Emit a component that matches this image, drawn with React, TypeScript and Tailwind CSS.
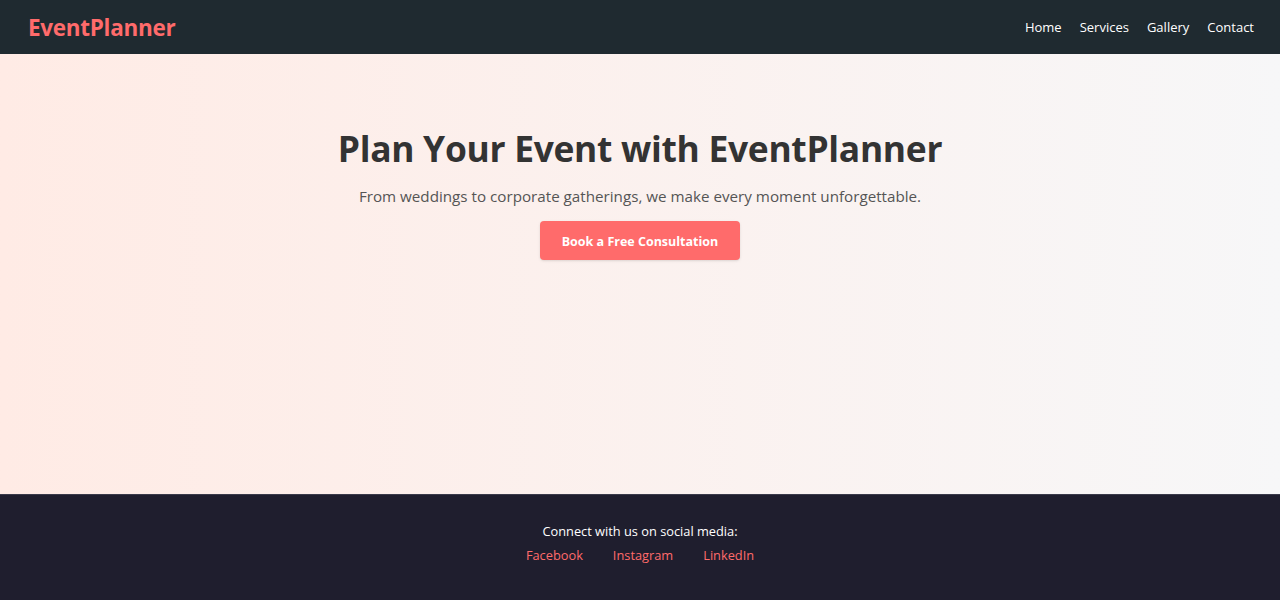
export default function App() {
  return (
    <div className="min-h-screen flex flex-col font-['Open_Sans',sans-serif]">
      <header className="h-[54px] bg-[#1f2a30] flex items-center justify-between pl-7 pr-[26px] pt-[2px]">
        <div className="text-[22.5px] font-bold text-[#ff6b6b] tracking-[-0.3px]">EventPlanner</div>
        <nav className="flex gap-[18px] text-[13px] text-white">
          <a href="#">Home</a>
          <a href="#">Services</a>
          <a href="#">Gallery</a>
          <a href="#">Contact</a>
        </nav>
      </header>

      <main className="h-[440px] bg-gradient-to-r from-[#ffebe5] to-[#f7f7f8] flex flex-col items-center pt-[72px]">
        <h1 className="text-[35.4px] leading-[44px] font-bold text-[#333333] tracking-[-0.3px]">
          Plan Your Event with EventPlanner
        </h1>
        <p className="mt-[15px] text-[15.2px] leading-[22px] text-[#555555]">
          From weddings to corporate gatherings, we make every moment unforgettable.
        </p>
        <button className="mt-[14px] w-[200px] h-[39px] pt-[3px] rounded bg-[#ff6b6b] text-white text-[12.5px] font-bold shadow-sm">
          Book a Free Consultation
        </button>
      </main>

      <footer className="h-[106px] bg-[#1f1e2e] border-t border-[#3a3a4a] flex flex-col items-center pt-[27px] text-[12.8px]">
        <p className="text-white">Connect with us on social media:</p>
        <div className="mt-[5px] flex gap-[30px] text-[#ff6b6b]">
          <a href="#">Facebook</a>
          <a href="#">Instagram</a>
          <a href="#">LinkedIn</a>
        </div>
      </footer>
    </div>
  );
}
